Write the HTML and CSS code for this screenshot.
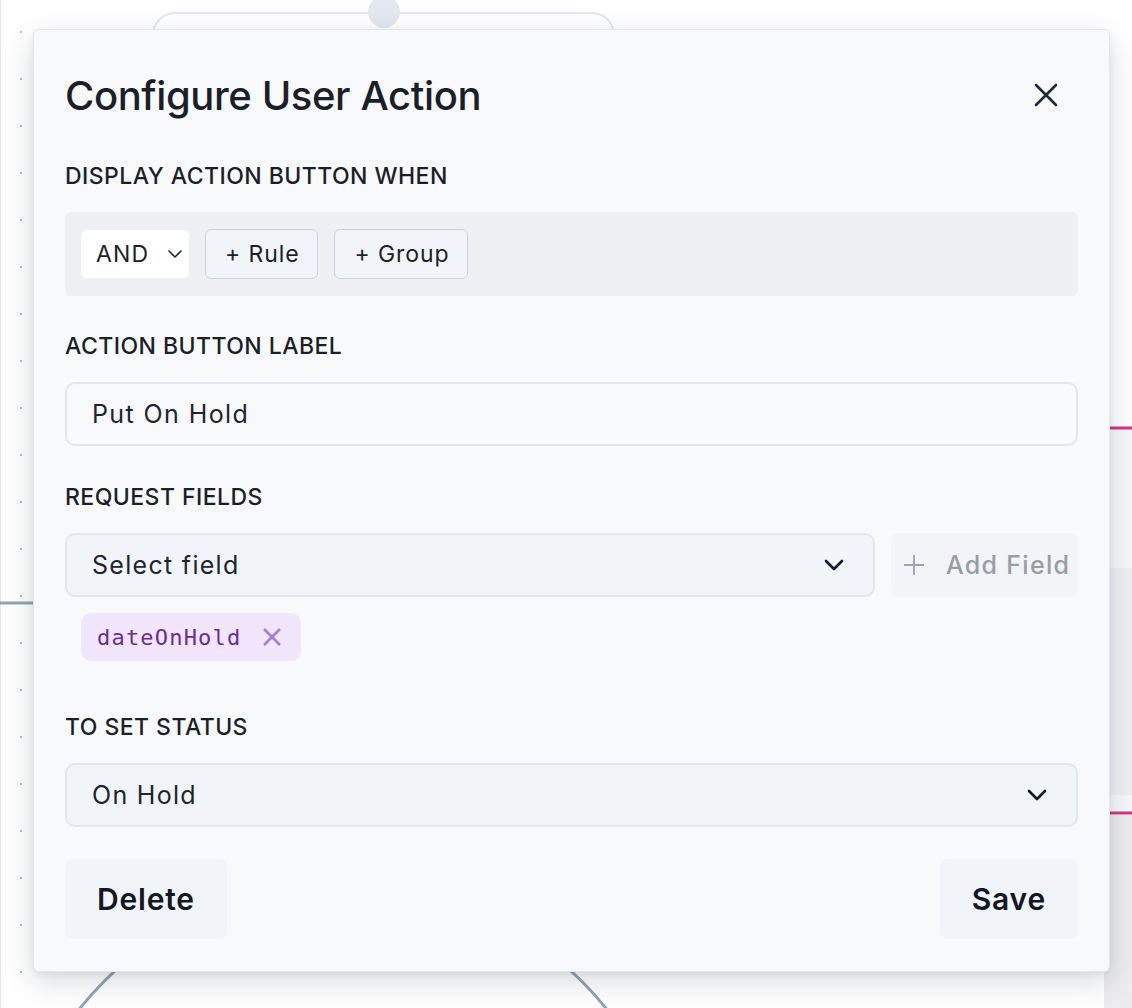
FILE: index.html
```html
<!DOCTYPE html>
<html>
<head>
<meta charset="utf-8">
<link rel="stylesheet" href="styles.css">
</head>
<body>
<svg class="canvas" width="1132" height="1008" viewBox="0 0 1132 1008">
  <line x1="0.5" y1="0" x2="0.5" y2="1008" stroke="#e5e7eb" stroke-width="1"/>
  <g fill="#9ca3af">
    <circle cx="21" cy="32" r="1"/><circle cx="21" cy="79" r="1"/><circle cx="21" cy="126" r="1"/>
    <circle cx="21" cy="173" r="1"/><circle cx="21" cy="220" r="1"/><circle cx="21" cy="267" r="1"/>
    <circle cx="21" cy="314" r="1"/><circle cx="21" cy="361" r="1"/><circle cx="21" cy="408" r="1"/>
    <circle cx="21" cy="455" r="1"/><circle cx="21" cy="502" r="1"/><circle cx="21" cy="549" r="1"/>
    <circle cx="21" cy="596" r="1"/><circle cx="21" cy="643" r="1"/><circle cx="21" cy="690" r="1"/>
    <circle cx="21" cy="737" r="1"/><circle cx="21" cy="784" r="1"/><circle cx="21" cy="831" r="1"/>
    <circle cx="21" cy="878" r="1"/><circle cx="21" cy="925" r="1"/><circle cx="21" cy="972" r="1"/>
  </g>
  <rect x="153" y="13" width="461" height="200" rx="22" fill="#ffffff" stroke="#e2e8f0" stroke-width="2"/>
  <circle cx="384" cy="12" r="16" fill="#e2e8f0"/>
  <line x1="0" y1="603" x2="40" y2="603" stroke="#94a3b8" stroke-width="3"/>
  <rect x="1104" y="428" width="40" height="385" fill="#f7f8fa"/>
  <rect x="1104" y="568" width="40" height="227" fill="#eef0f4"/>
  <line x1="1100" y1="428" x2="1132" y2="428" stroke="#d63384" stroke-width="3"/>
  <line x1="1100" y1="813" x2="1132" y2="813" stroke="#d63384" stroke-width="3"/>
  <rect x="1104" y="815" width="40" height="200" fill="#ececee"/>
  <circle cx="343" cy="1219" r="337" fill="none" stroke="#94a3b8" stroke-width="3"/>
</svg>

<div class="modal">
  <div class="header">
    <h1 class="title">Configure User Action</h1>
    <button class="close" aria-label="Close">
      <svg width="24" height="24" viewBox="0 0 24 24"><path d="M2 2L22 22M22 2L2 22" stroke="#1f2937" stroke-width="2.6" stroke-linecap="round"/></svg>
    </button>
  </div>

  <div class="label">Display action button when</div>
  <div class="rulebox">
    <div class="combinator">AND
      <svg width="16" height="10" viewBox="0 0 16 10"><path d="M2 2L8 8L14 2" fill="none" stroke="#1f2937" stroke-width="1.6" stroke-linecap="round" stroke-linejoin="round"/></svg>
    </div>
    <button class="rbtn">+ Rule</button>
    <button class="rbtn">+ Group</button>
  </div>

  <div class="label l2">Action button label</div>
  <div class="input">Put On Hold</div>

  <div class="label l3">Request fields</div>
  <div class="fieldrow">
    <div class="select grow">Select field
      <svg class="chev" width="20" height="12" viewBox="0 0 20 12"><path d="M2 2L10 10L18 2" fill="none" stroke="#111827" stroke-width="2.6" stroke-linecap="round" stroke-linejoin="round"/></svg>
    </div>
    <button class="addfield">
      <svg width="22" height="22" viewBox="0 0 22 22"><path d="M11 1V21M1 11H21" stroke="#9ca3af" stroke-width="1.8"/></svg>
      Add Field
    </button>
  </div>
  <div class="chips">
    <span class="chip">dateOnHold
      <svg width="20" height="20" viewBox="0 0 20 20"><path d="M2 2L18 18M18 2L2 18" stroke="#a37fdb" stroke-width="2.6"/></svg>
    </span>
  </div>

  <div class="label l4">To set status</div>
  <div class="select">On Hold
    <svg class="chev" width="20" height="12" viewBox="0 0 20 12"><path d="M2 2L10 10L18 2" fill="none" stroke="#111827" stroke-width="2.6" stroke-linecap="round" stroke-linejoin="round"/></svg>
  </div>

  <div class="footer">
    <button class="fbtn">Delete</button>
    <button class="fbtn">Save</button>
  </div>
</div>
</body>
</html>
```

FILE: styles.css
```css
* { box-sizing: border-box; }
html, body { margin: 0; padding: 0; }
body {
  width: 1132px;
  height: 1008px;
  position: relative;
  overflow: hidden;
  background: #ffffff;
  font-family: Inter, "Noto Sans", sans-serif;
  color: #1e2430;
}
.canvas { position: absolute; left: 0; top: 0; }

.modal {
  position: absolute;
  left: 33px;
  top: 29px;
  width: 1077px;
  height: 943px;
  background: #f8f9fb;
  border: 1px solid #e2e6ee;
  border-radius: 6px;
  box-shadow: 0 10px 30px rgba(15, 23, 42, 0.16), 0 2px 6px rgba(15, 23, 42, 0.06);
  padding: 31px 31px 31px 31px;
  display: flex;
  flex-direction: column;
}

.header {
  height: 68px;
  display: flex;
  align-items: center;
  justify-content: space-between;
}
.title {
  margin: 0;
  font-size: 40px;
  font-weight: 500;
  color: #1a1f2b;
  letter-spacing: -0.4px;
}
.close {
  border: 0;
  background: transparent;
  padding: 0;
  margin-right: 20px;
  width: 24px;
  height: 24px;
  display: flex;
}

.label {
  font-size: 23px;
  font-weight: 500;
  text-transform: uppercase;
  letter-spacing: 0.45px;
  line-height: 24px;
  color: #1a1f2b;
  margin-top: 35px;
  margin-bottom: 24px;
}
.label.l2 { margin-top: 38px; }
.label.l3 { margin-top: 39px; }
.label.l4 { margin-top: 54px; }

.rulebox {
  height: 84px;
  background: #eef0f4;
  border-radius: 6px;
  display: flex;
  align-items: center;
  gap: 16px;
  padding: 0 16px;
}
.combinator {
  height: 48px;
  width: 108px;
  background: #ffffff;
  border-radius: 6px;
  display: flex;
  align-items: center;
  justify-content: space-between;
  padding: 0 6px 0 15px;
  font-size: 23px;
  letter-spacing: 1.2px;
  color: #1a1f2b;
}
.rbtn {
  height: 50px;
  background: #f1f4f9;
  border: 1px solid #cbd3df;
  border-radius: 6px;
  font-family: inherit;
  font-size: 23px;
  letter-spacing: 0.9px;
  color: #1a1f2b;
  padding: 0 18px 0 19px;
}

.input {
  height: 64px;
  border: 2px solid #e2e7ee;
  border-radius: 10px;
  background: #f8f9fb;
  display: flex;
  align-items: center;
  padding: 0 25px;
  font-size: 25px;
  letter-spacing: 1.4px;
  color: #1e2430;
}

.fieldrow {
  display: flex;
  gap: 16px;
}
.select {
  height: 64px;
  border: 2px solid #e2e7ee;
  border-radius: 10px;
  background: #f1f4f9;
  display: flex;
  align-items: center;
  justify-content: space-between;
  padding: 0 29px 0 25px;
  font-size: 25px;
  letter-spacing: 1.3px;
  color: #1e2430;
}
.select.grow { flex: 1; }
.addfield {
  width: 187px;
  height: 64px;
  border: 0;
  border-radius: 8px;
  background: #f2f4f7;
  display: flex;
  align-items: center;
  gap: 21px;
  padding: 0 0 0 12px;
  font-family: inherit;
  font-size: 25px;
  font-weight: 500;
  letter-spacing: 1.3px;
  color: #9a9ca6;
  white-space: nowrap;
}

.chips {
  display: flex;
  margin-top: 16px;
  padding-left: 16px;
}
.chip {
  height: 48px;
  background: #f2e6fd;
  border-radius: 10px;
  display: flex;
  align-items: center;
  gap: 21px;
  padding: 0 19px 0 16px;
  font-family: "DejaVu Sans Mono", "Liberation Mono", monospace;
  font-size: 22px;
  letter-spacing: 1.2px;
  color: #6b2aa0;
}

.footer {
  margin-top: 32px;
  display: flex;
  justify-content: space-between;
}
.fbtn {
  height: 80px;
  border: 0;
  border-radius: 8px;
  background: #f1f4f9;
  padding: 0 32px;
  font-family: inherit;
  font-size: 30px;
  font-weight: 600;
  letter-spacing: 0.8px;
  color: #121826;
}
```
